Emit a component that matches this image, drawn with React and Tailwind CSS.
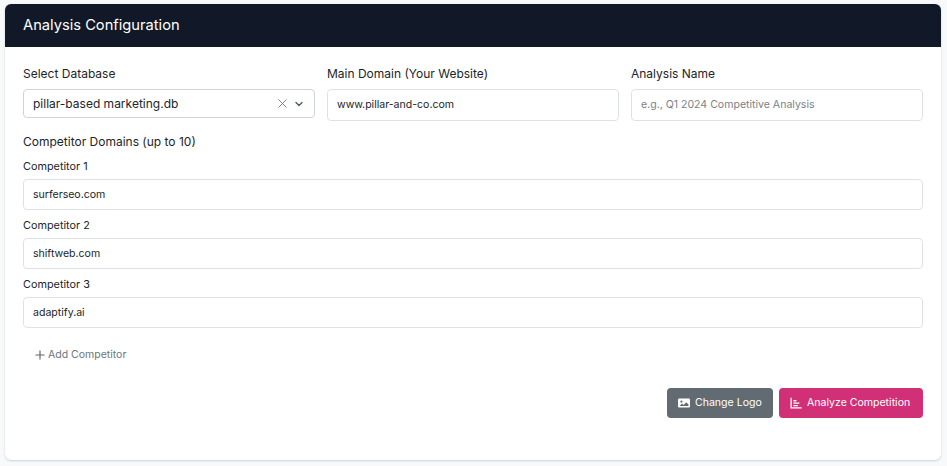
import React from 'react';
import { X, ChevronDown, Plus } from 'lucide-react';

const inputClass = "block w-full h-[31px] rounded-[4px] border border-[#dee2e6] bg-white px-[9px] text-[10.55px] text-[#212529] outline-none placeholder:text-[#7b8288]";

const CompetitorField = ({ n, value }) => (
    <div className="mb-[6px]">
        <label className="block h-[20px] pt-[1px] mb-[2px] text-[10.85px] leading-[16px] text-[#212529]">Competitor {n}</label>
        <input className={inputClass} defaultValue={value} />
    </div>
);

const App = () => {
    return (
        <div className="w-[947px] h-[466px] overflow-hidden bg-[#f8f9fa] px-[5px] pt-[4px] font-['Inter',sans-serif]">
            <div className="w-[936px] h-[456px] rounded-[6px] bg-white shadow-[0_1px_2px_rgba(100,116,150,0.3)] overflow-hidden">
                {/* Header */}
                <div className="h-[43px] bg-[#111827] flex items-center px-[18px] pb-[1px] text-[14.7px] font-normal text-white">
                    Analysis Configuration
                </div>

                <div className="px-[18px] pt-[18px]">
                    <div className="grid grid-cols-3 gap-x-[12px]">
                        <div>
                            <label className="block h-[24px] text-[12px] leading-[18px] text-[#212529]">Select Database</label>
                            <div className="flex items-center h-[29px] rounded-[4px] border border-[#ced4da] pl-[9px] pr-[9px] text-[12px] text-[#212529]">
                                <span className="flex-1">pillar-based marketing.db</span>
                                <X size={15} strokeWidth={1.4} className="text-[#6b7280]" />
                                <ChevronDown size={12} strokeWidth={2.6} className="text-[#4b5563] ml-[3px]" />
                            </div>
                        </div>
                        <div>
                            <label className="block h-[24px] text-[12px] leading-[18px] text-[#212529]">Main Domain (Your Website)</label>
                            <input className={`${inputClass} !h-[32px] pb-[2px]`} defaultValue="www.pillar-and-co.com" />
                        </div>
                        <div>
                            <label className="block h-[24px] text-[12px] leading-[18px] text-[#212529]">Analysis Name</label>
                            <input className={`${inputClass} !h-[32px] pb-[2px]`} placeholder="e.g., Q1 2024 Competitive Analysis" />
                        </div>
                    </div>

                    <div className="mt-[12px] h-[18px] text-[12px] leading-[18px] text-[#212529]">Competitor Domains (up to 10)</div>
                    <div className="mt-[6px]">
                        <CompetitorField n={1} value="surferseo.com" />
                        <CompetitorField n={2} value="shiftweb.com" />
                        <CompetitorField n={3} value="adaptify.ai" />
                    </div>

                    <button className="flex items-center gap-[1px] mt-[17px] ml-[10px] h-[20px] text-[10.5px] text-[#6c757d]">
                        <Plus size={14} strokeWidth={2} className="text-[#5f6670]" />
                        Add Competitor
                    </button>

                    <div className="flex justify-end gap-[6px] mt-[23px]">
                        <button className="flex items-center gap-[5px] w-[106px] h-[30px] pl-[11px] rounded-[4px] bg-[#626a72] text-[10.55px] font-normal text-white">
                            <svg width="12" height="12" viewBox="0 0 16 16" fill="currentColor">
                                <path fillRule="evenodd" d="M1.5 2A1.5 1.5 0 0 0 0 3.5v9A1.5 1.5 0 0 0 1.5 14h13a1.5 1.5 0 0 0 1.5-1.5v-9A1.5 1.5 0 0 0 14.5 2h-13zM4.5 4.5a1.5 1.5 0 1 1 0 3 1.5 1.5 0 0 1 0-3zM2 12l3.5-3.5 2 2L11 7l3 3v2H2z" />
                            </svg>
                            Change Logo
                        </button>
                        <button className="flex items-center gap-[5px] w-[144px] h-[30px] pl-[11px] rounded-[4px] bg-[#d13076] text-[10.55px] font-normal text-white">
                            <svg width="12" height="12" viewBox="0 0 16 16" fill="none" stroke="currentColor" strokeWidth="1.8">
                                <path d="M1.5 1v13.5H15.5" />
                                <path d="M4.5 5h4M4.5 8.2h8M4.5 11.4h6" />
                            </svg>
                            Analyze Competition
                        </button>
                    </div>
                </div>
            </div>
        </div>
    );
};

export default App;
